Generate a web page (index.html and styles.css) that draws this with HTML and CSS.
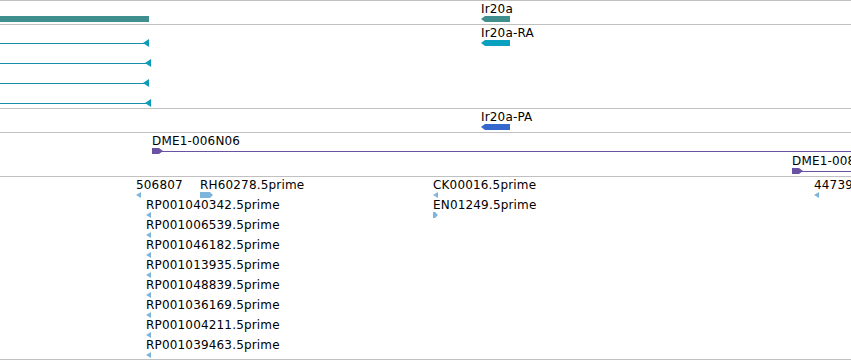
FILE: index.html
```html
<!DOCTYPE html>
<html lang="en">
<head>
    <meta charset="UTF-8">
    <title>Ir20a region</title>
    <link rel="stylesheet" href="styles.css">
</head>
<body>
    <div id="tracks">
        <!-- gene track -->
        <div class="track gene" style="height: 23px;">
            <div class="feat" style="left: 0; top: 0;">
                <span class="label"></span>
                <div class="box" style="width: 149px;"></div>
            </div>
            <div class="feat" style="left: 481px; top: 0;">
                <span class="label">Ir20a</span>
                <div class="box minus" style="width: 29px;"></div>
            </div>
        </div>

        <!-- transcript track -->
        <div class="track transcript" style="height: 83px;">
            <div class="feat" style="left: 481px; top: 0;">
                <span class="label">Ir20a-RA</span>
                <div class="box minus" style="width: 29px;"></div>
            </div>
            <div class="feat" style="left: 0; top: 0;">
                <span class="label"></span>
                <div class="tx" style="width: 149px;"><i class="line"></i><b class="head"></b></div>
            </div>
            <div class="feat" style="left: 0; top: 20px;">
                <span class="label"></span>
                <div class="tx" style="width: 151px;"><i class="line"></i><b class="head"></b></div>
            </div>
            <div class="feat" style="left: 0; top: 40px;">
                <span class="label"></span>
                <div class="tx" style="width: 149px;"><i class="line"></i><b class="head"></b></div>
            </div>
            <div class="feat" style="left: 0; top: 60px;">
                <span class="label"></span>
                <div class="tx" style="width: 151px;"><i class="line"></i><b class="head"></b></div>
            </div>
        </div>

        <!-- protein track -->
        <div class="track protein" style="height: 23px;">
            <div class="feat" style="left: 481px; top: 0;">
                <span class="label">Ir20a-PA</span>
                <div class="box minus" style="width: 29px;"></div>
            </div>
        </div>

        <!-- BAC clones -->
        <div class="track clone" style="height: 43px;">
            <div class="feat wide" style="left: 152px; top: 0;">
                <span class="label">DME1-006N06</span>
                <div class="span"><i class="line"></i><b class="tip"></b></div>
            </div>
            <div class="feat wide" style="left: 792px; top: 20px;">
                <span class="label">DME1-008</span>
                <div class="span"><i class="line"></i><b class="tip"></b></div>
            </div>
        </div>

        <!-- ESTs -->
        <div class="track est" style="height: 182px;">
            <div class="feat" style="left: 136px; top: 0;"><span class="label">506807</span><div class="arrow minus"></div></div>
            <div class="feat" style="left: 200px; top: 0;"><span class="label">RH60278.5prime</span><div class="arrow plus" style="width: 13px;"></div></div>
            <div class="feat" style="left: 433px; top: 0;"><span class="label">CK00016.5prime</span><div class="arrow minus"></div></div>
            <div class="feat" style="left: 814px; top: 0;"><span class="label">44739</span><div class="arrow minus"></div></div>
            <div class="feat" style="left: 146px; top: 20px;"><span class="label">RP001040342.5prime</span><div class="arrow minus"></div></div>
            <div class="feat" style="left: 433px; top: 20px;"><span class="label">EN01249.5prime</span><div class="arrow plus"></div></div>
            <div class="feat" style="left: 146px; top: 40px;"><span class="label">RP001006539.5prime</span><div class="arrow minus"></div></div>
            <div class="feat" style="left: 146px; top: 60px;"><span class="label">RP001046182.5prime</span><div class="arrow minus"></div></div>
            <div class="feat" style="left: 146px; top: 80px;"><span class="label">RP001013935.5prime</span><div class="arrow minus"></div></div>
            <div class="feat" style="left: 146px; top: 100px;"><span class="label">RP001048839.5prime</span><div class="arrow minus"></div></div>
            <div class="feat" style="left: 146px; top: 120px;"><span class="label">RP001036169.5prime</span><div class="arrow minus"></div></div>
            <div class="feat" style="left: 146px; top: 140px;"><span class="label">RP001004211.5prime</span><div class="arrow minus"></div></div>
            <div class="feat" style="left: 146px; top: 160px;"><span class="label">RP001039463.5prime</span><div class="arrow minus"></div></div>
        </div>
    </div>
</body>
</html>
```

FILE: styles.css
```css
html, body {
    margin: 0;
    padding: 0;
    background: #fff;
    overflow: hidden;
}
#tracks {
    width: 851px;
    border-top: 1px solid #c0c0c0;
    font-family: "DejaVu Sans", sans-serif;
    font-size: 12px;
    letter-spacing: 0.17px;
    color: #000;
}
.track {
    position: relative;
    overflow: hidden;
    border-bottom: 1px solid #c0c0c0;
}
.feat {
    position: absolute;
}
.feat.wide {
    right: 0;
}
.label {
    display: block;
    height: 14px;
    padding-top: 1px;
    line-height: 14px;
    white-space: nowrap;
}
.box {
    height: 6px;
}
.box.minus {
    clip-path: polygon(4px 0, 100% 0, 100% 100%, 4px 100%, 0 50%);
}
.gene .box {
    background: #3f8f8f;
}
.transcript .box {
    background: #0aa0c0;
}
.protein .box {
    background: #3568cc;
}

/* transcript running off the left edge */
.tx {
    position: relative;
    height: 6px;
}
.tx .line {
    position: absolute;
    left: 0;
    right: 3px;
    top: 3px;
    height: 1px;
    background: #1a8caa;
}
.tx .head {
    position: absolute;
    right: 0;
    top: -1px;
    width: 6px;
    height: 8px;
    background: #0a9cbd;
    clip-path: polygon(0 50%, 100% 0, 100% 100%);
}

/* clones */
.span {
    position: relative;
    height: 6px;
}
.span .line {
    position: absolute;
    left: 0;
    right: 0;
    top: 3px;
    height: 1px;
    background: #6a52a3;
}
.span .tip {
    position: absolute;
    left: 0;
    top: 0;
    width: 11px;
    height: 6px;
    background: #6a52a3;
    clip-path: polygon(0 0, 7px 0, 100% 50%, 7px 100%, 0 100%);
}

/* ESTs */
.arrow {
    width: 5px;
    height: 6px;
    background: #7fb5dd;
}
.arrow.minus {
    clip-path: polygon(0 50%, 100% 0, 100% 100%);
}
.arrow.plus {
    clip-path: polygon(0 0, calc(100% - 3px) 0, 100% 50%, calc(100% - 3px) 100%, 0 100%);
}
```
